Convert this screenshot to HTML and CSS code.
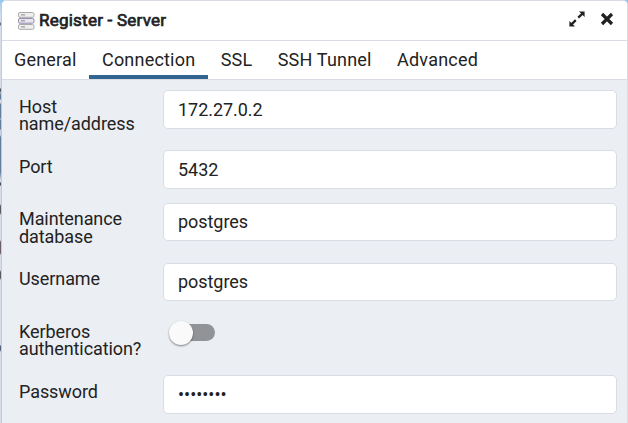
FILE: index.html
```html
<!DOCTYPE html>
<html lang="en">
<head>
<meta charset="utf-8">
<title>Register - Server</title>
<link rel="stylesheet" href="styles.css">
</head>
<body>
<section class="dialog">
  <header class="titlebar">
    <svg class="server-icon" width="18" height="20" viewBox="0 0 18 20" fill="#efefef" stroke="#aaa">
      <rect x="1.5" y="1.5" width="15.5" height="4.8" rx="1.5"/>
      <rect x="1.5" y="13.5" width="15.5" height="4.8" rx="1.5"/>
      <rect x="1.5" y="7.4" width="15.5" height="4.8" rx="1.5" fill="#e9e6f2" stroke="#8c86a5"/>
      <path d="M4 3.9h4M4 9.8h4M4 15.9h4" stroke="#888"/>
    </svg>
    <h1 class="title">Register - Server</h1>
    <svg class="expand" width="16" height="16" viewBox="0 0 16 16" fill="#222" stroke="#222">
      <path d="M9.2 6.6 13.5 2.7M6.8 9.2 2.5 13.3" stroke-width="2.3" fill="none"/>
      <path d="M10 .5h5.6v5.6zM.4 9.9v5.6H6z" stroke="none"/>
    </svg>
    <svg class="close" width="14" height="14" viewBox="0 0 14 14" stroke="#222" stroke-width="3.2">
      <path d="M2 2 12 12M12 2 2 12"/>
    </svg>
  </header>
  <nav class="tabs">
    <span class="tab">General</span>
    <span class="tab active">Connection</span>
    <span class="tab">SSL</span>
    <span class="tab">SSH Tunnel</span>
    <span class="tab">Advanced</span>
  </nav>
  <form class="form">
    <label class="label">Host<br>name/address</label>
    <div class="field">172.27.0.2</div>
    <label class="label">Port</label>
    <div class="field">5432</div>
    <label class="label raised">Maintenance<br>database</label>
    <div class="field short">postgres</div>
    <label class="label raised">Username</label>
    <div class="field short">postgres</div>
    <label class="label option">Kerberos<br>authentication?</label>
    <div class="switch"><span class="knob"></span></div>
    <label class="label">Password</label>
    <div class="field password">••••••••</div>
  </form>
</section>
</body>
</html>
```
FILE: styles.css
```css
* { box-sizing: border-box; }
body {
  margin: 0;
  height: 423px;
  padding-left: 1px;
  overflow: hidden;
  font: 18px/18px Roboto, sans-serif;
  color: #222;
  background: linear-gradient(#8fc5f4 0, #c9dcef 12px, #d6dde8 22px, #5d7791 23px 25px, #d6dde8 26px 88px, #444d59 89px 91px, #9ab 92px 94px, #607d9c 95px 99px, #d6dde8 100px 103px, #607d9c 104px 118px, #c4d0df 119px, #607d9c 120px 129px, #c4d0df 130px 135px, #607d9c 137px 172px, #d6dde8 180px 182px, #444d59 183px 185px, #d6dde8 186px 204px, #5d5964 206px 213px, #d6dde8 215px 240px, #6e5c69 242px 253px, #d6dde8 255px 270px, #5d5964 272px 278px, #d6dde8 280px 345px, #52617a 346px 350px, #d6dde8 352px);
}
.dialog {
  height: 430px;
  border: 1px solid #d9dce5;
  border-left-color: #c6cad4;
  border-radius: 5px 5px 0 0;
  background: #ebeef3;
  overflow: hidden;
}
.titlebar {
  display: flex;
  height: 40px;
  padding: 0 13px 0 15px;
  background: #fff;
  border-bottom: 1px solid #d9dce5;
}
.server-icon { margin-top: 10px; }
.title {
  flex: 1;
  margin: 10px 0 0 4px;
  font-size: 17px;
  line-height: 18px;
  font-weight: 400;
  letter-spacing: 0.23px;
  -webkit-text-stroke: 0.7px #222;
}
.expand { margin: 10px 15px 0 0; }
.close { margin-top: 11px; }
.tabs {
  display: flex;
  height: 39px;
  background: #fff;
  border-bottom: 1px solid #d9dce5;
  letter-spacing: 0.2px;
}
.tab { padding: 10px 12.7px 0; }
.tab:first-child { padding-left: 12px; }
.active { border-bottom: 4px solid #326690; }
.form {
  display: grid;
  grid-template-columns: 144px 454px;
  grid-template-rows: 60px 53px 60px 56px 56px 55px;
  padding: 10px 0 0 17px;
}
.label {
  padding-top: 8px;
  line-height: 17.4px;
  letter-spacing: -0.08px;
}
.raised { padding-top: 7px; line-height: 18px; }
.option { padding-top: 4px; }
.field {
  height: 39px;
  padding: 10px 14px;
  border: 1px solid #d9dce5;
  border-radius: 5px;
  background: #fff;
  letter-spacing: -0.05px;
}
.short { height: 38px; padding-top: 9px; }
.password { letter-spacing: 0; }
.switch {
  width: 41px;
  height: 17px;
  margin: 5px 0 0 11px;
  border-radius: 9px;
  background: #929397;
}
.knob {
  display: block;
  width: 24px;
  height: 24px;
  margin: -3px 0 0 -5px;
  border-radius: 50%;
  background: #fafafa;
  box-shadow: 0 1px 2px #0007;
}
```
